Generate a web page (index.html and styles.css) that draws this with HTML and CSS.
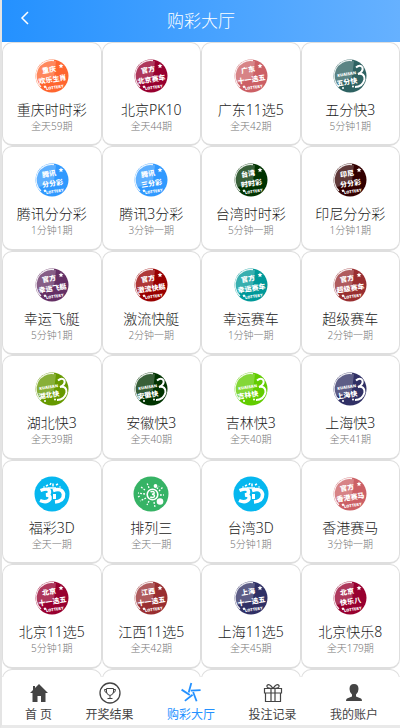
FILE: index.html
```html
<!DOCTYPE html>
<html lang="zh-CN">
<head>
<meta charset="utf-8">
<meta name="viewport" content="width=device-width, initial-scale=1">
<title>购彩大厅</title>
<link rel="stylesheet" href="styles.css">
</head>
<body>
<svg class="defs" aria-hidden="true">
  <symbol id="disc" viewBox="0 0 36 36">
    <circle cx="18" cy="18" r="16.5" fill="currentColor"/>
    <path d="M2.500 18A15.500 15.500 0 0 1 22 3L20 19Q12 24 4 25Z" fill="#fff" opacity=".22"/>
    <path d="M7 29A15.300 15.300 0 0 1 20 2.700" fill="none" stroke="#fff" stroke-width="1.200" opacity=".9"/>
  </symbol>
  <symbol id="badge" viewBox="0 0 36 36">
    <use href="#disc"/>
    <path d="M27 5.500l.7 1.600 1.700.2-1.300 1.200.4 1.700-1.500-.9-1.500.9.4-1.700-1.300-1.200 1.700-.2ZM11 27l.5 1.100 1.200.2-.9.800.3 1.200-1.100-.6-1.100.6.3-1.200-.9-.8 1.200-.2Z" fill="#fff"/>
  </symbol>
  <symbol id="quick" viewBox="0 0 36 36">
    <use href="#disc"/>
    <path d="M24 9.500Q28 6 30.500 9.500Q31.500 13.500 26 16Q33 15 32.500 21.500Q30.500 29 23 29" fill="none" stroke="#fff" stroke-width="2"/>
    <circle cx="11" cy="30" r="1" fill="#fff"/><circle cx="21" cy="28.500" r="1" fill="#fff"/>
  </symbol>
  <symbol id="three-d" viewBox="0 0 36 36">
    <circle cx="18" cy="18" r="17.500" fill="currentColor"/>
    <path d="M6.500 14.500Q16 11 15.500 16.500Q15 18.500 12 19Q17 19 16 23Q13 27.500 6 24.500" fill="none" stroke="#fff" stroke-width="3.400"/>
    <path d="M19 14.500Q28 11.500 29.500 18Q30 25 21 26" fill="none" stroke="#fff" stroke-width="3.600"/>
    <path d="M20.500 18V23" stroke="#fff" stroke-width="3"/>
    <path d="M12 10l2-1M16 9l1-2M19 7.500v3M22 9l2-1M14 12h8" stroke="#fff" stroke-width="1.500"/>
    <circle cx="10" cy="11" r=".8" fill="#fff"/><circle cx="26" cy="11" r=".8" fill="#fff"/>
  </symbol>
  <symbol id="burst" viewBox="0 0 36 36">
    <circle cx="18" cy="18" r="17.500" fill="currentColor"/>
    <circle cx="19.500" cy="18.500" r="5.300" fill="none" stroke="#fff" stroke-width="1.600"/>
    <path d="M17.500 15.800Q22 14.500 21 17.800L19 18.300Q22.500 18.500 21 21Q19.500 22 17.300 21" fill="none" stroke="#fff" stroke-width="1.500"/>
    <circle cx="27" cy="25.500" r="3.300" fill="#fff"/><circle cx="22.500" cy="10" r="1.900" fill="#fff"/>
    <path d="M12 14L8 11M12 18L5 17M13 22L7 25M16 25L14 29M16 12L14 7M26 15L30 11M27 19h4M21 26l1 5M24 13l2-3M5 21l2-1" stroke="#fff" stroke-width="1.300" stroke-dasharray="1.800 1.300"/>
  </symbol>
</svg>

<header class="topbar">
  <a class="back" href="#" aria-label="返回"><svg viewBox="0 0 10 14"><path d="M8 1L2 7L8 13"/></svg></a>
  <h1>购彩大厅</h1>
</header>

<main class="hall">
  <a class="card" href="#"><svg class="logo orange" viewBox="0 0 36 36"><use href="#badge"/><g class="mark"><text x="16" y="14">重庆</text><text x="18" y="24">欢乐生肖</text><text class="caption" x="19" y="31">LOTTERY</text></g></svg><h2>重庆时时彩</h2><p>全天59期</p></a>
  <a class="card" href="#"><svg class="logo crimson" viewBox="0 0 36 36"><use href="#badge"/><g class="mark"><text x="16" y="14">官方</text><text x="18" y="24">北京赛车</text><text class="caption" x="19" y="31">LOTTERY</text></g></svg><h2>北京PK10</h2><p>全天44期</p></a>
  <a class="card" href="#"><svg class="logo rose" viewBox="0 0 36 36"><use href="#badge"/><g class="mark"><text x="16" y="14">广东</text><text x="18" y="24">十一选五</text><text class="caption" x="19" y="31">LOTTERY</text></g></svg><h2>广东11选5</h2><p>全天42期</p></a>
  <a class="card" href="#"><svg class="logo slate" viewBox="0 0 36 36"><use href="#quick"/><g class="mark"><text class="caption" x="15" y="17">KUAISAN</text><text x="14" y="26">五分快</text></g></svg><h2>五分快3</h2><p>5分钟1期</p></a>

  <a class="card" href="#"><svg class="logo blue" viewBox="0 0 36 36"><use href="#badge"/><g class="mark"><text x="16" y="14">腾讯</text><text x="18" y="24">分分彩</text><text class="caption" x="19" y="31">LOTTERY</text></g></svg><h2>腾讯分分彩</h2><p>1分钟1期</p></a>
  <a class="card" href="#"><svg class="logo blue" viewBox="0 0 36 36"><use href="#badge"/><g class="mark"><text x="16" y="14">腾讯</text><text x="18" y="24">三分彩</text><text class="caption" x="19" y="31">LOTTERY</text></g></svg><h2>腾讯3分彩</h2><p>3分钟一期</p></a>
  <a class="card" href="#"><svg class="logo forest" viewBox="0 0 36 36"><use href="#badge"/><g class="mark"><text x="16" y="14">台湾</text><text x="18" y="24">时时彩</text><text class="caption" x="19" y="31">LOTTERY</text></g></svg><h2>台湾时时彩</h2><p>5分钟一期</p></a>
  <a class="card" href="#"><svg class="logo maroon" viewBox="0 0 36 36"><use href="#badge"/><g class="mark"><text x="16" y="14">印尼</text><text x="18" y="24">分分彩</text><text class="caption" x="19" y="31">LOTTERY</text></g></svg><h2>印尼分分彩</h2><p>1分钟1期</p></a>

  <a class="card" href="#"><svg class="logo purple" viewBox="0 0 36 36"><use href="#badge"/><g class="mark"><text x="16" y="14">官方</text><text x="18" y="24">幸运飞艇</text><text class="caption" x="19" y="31">LOTTERY</text></g></svg><h2>幸运飞艇</h2><p>5分钟1期</p></a>
  <a class="card" href="#"><svg class="logo red" viewBox="0 0 36 36"><use href="#badge"/><g class="mark"><text x="16" y="14">官方</text><text x="18" y="24">激流快艇</text><text class="caption" x="19" y="31">LOTTERY</text></g></svg><h2>激流快艇</h2><p>2分钟一期</p></a>
  <a class="card" href="#"><svg class="logo teal" viewBox="0 0 36 36"><use href="#badge"/><g class="mark"><text x="16" y="14">官方</text><text x="18" y="24">幸运赛车</text><text class="caption" x="19" y="31">LOTTERY</text></g></svg><h2>幸运赛车</h2><p>1分钟一期</p></a>
  <a class="card" href="#"><svg class="logo brick" viewBox="0 0 36 36"><use href="#badge"/><g class="mark"><text x="16" y="14">官方</text><text x="18" y="24">超级赛车</text><text class="caption" x="19" y="31">LOTTERY</text></g></svg><h2>超级赛车</h2><p>2分钟一期</p></a>

  <a class="card" href="#"><svg class="logo olive" viewBox="0 0 36 36"><use href="#quick"/><g class="mark"><text class="caption" x="15" y="17">KUAISAN</text><text x="14" y="26">湖北快</text></g></svg><h2>湖北快3</h2><p>全天39期</p></a>
  <a class="card" href="#"><svg class="logo forest" viewBox="0 0 36 36"><use href="#quick"/><g class="mark"><text class="caption" x="15" y="17">KUAISAN</text><text x="14" y="26">安徽快</text></g></svg><h2>安徽快3</h2><p>全天40期</p></a>
  <a class="card" href="#"><svg class="logo lime" viewBox="0 0 36 36"><use href="#quick"/><g class="mark"><text class="caption" x="15" y="17">KUAISAN</text><text x="14" y="26">吉林快</text></g></svg><h2>吉林快3</h2><p>全天40期</p></a>
  <a class="card" href="#"><svg class="logo navy" viewBox="0 0 36 36"><use href="#quick"/><g class="mark"><text class="caption" x="15" y="17">KUAISAN</text><text x="14" y="26">上海快</text></g></svg><h2>上海快3</h2><p>全天41期</p></a>

  <a class="card" href="#"><svg class="logo cyan" viewBox="0 0 36 36"><use href="#three-d"/></svg><h2>福彩3D</h2><p>全天一期</p></a>
  <a class="card" href="#"><svg class="logo green" viewBox="0 0 36 36"><use href="#burst"/></svg><h2>排列三</h2><p>全天一期</p></a>
  <a class="card" href="#"><svg class="logo cyan" viewBox="0 0 36 36"><use href="#three-d"/></svg><h2>台湾3D</h2><p>5分钟1期</p></a>
  <a class="card" href="#"><svg class="logo rose" viewBox="0 0 36 36"><use href="#badge"/><g class="mark"><text x="16" y="14">官方</text><text x="18" y="24">香港赛马</text><text class="caption" x="19" y="31">LOTTERY</text></g></svg><h2>香港赛马</h2><p>3分钟一期</p></a>

  <a class="card" href="#"><svg class="logo crimson" viewBox="0 0 36 36"><use href="#badge"/><g class="mark"><text x="16" y="14">北京</text><text x="18" y="24">十一选五</text><text class="caption" x="19" y="31">LOTTERY</text></g></svg><h2>北京11选5</h2><p>5分钟1期</p></a>
  <a class="card" href="#"><svg class="logo brick" viewBox="0 0 36 36"><use href="#badge"/><g class="mark"><text x="16" y="14">江西</text><text x="18" y="24">十一选五</text><text class="caption" x="19" y="31">LOTTERY</text></g></svg><h2>江西11选5</h2><p>全天42期</p></a>
  <a class="card" href="#"><svg class="logo navy" viewBox="0 0 36 36"><use href="#badge"/><g class="mark"><text x="16" y="14">上海</text><text x="18" y="24">十一选五</text><text class="caption" x="19" y="31">LOTTERY</text></g></svg><h2>上海11选5</h2><p>全天45期</p></a>
  <a class="card" href="#"><svg class="logo crimson" viewBox="0 0 36 36"><use href="#badge"/><g class="mark"><text x="16" y="14">北京</text><text x="18" y="24">快乐八</text><text class="caption" x="19" y="31">LOTTERY</text></g></svg><h2>北京快乐8</h2><p>全天179期</p></a>

  <div class="card"></div><div class="card"></div><div class="card"></div><div class="card"></div>
</main>

<nav class="tabs">
  <a href="#"><svg viewBox="0 0 24 24"><path fill="currentColor" d="M12 3L21 12H18.500V21H14V15H10.500V21H5.500V12H3L6 9V5H8V7Z"/></svg><span>首 页</span></a>
  <a href="#"><svg viewBox="0 0 24 24" fill="none" stroke="currentColor"><circle cx="12" cy="12" r="10" stroke-width="1.300"/><path d="M8.500 7.500H15.500V11Q15 14 12 14.500Q9 14 8.500 11ZM8.500 8.500H6.500Q6.500 11.500 9 12M15.500 8.500H17.500Q17.500 11.500 15 12M12 14.500V17M9.500 17.500H14.500"/></svg><span>开奖结果</span></a>
  <a class="active" href="#" aria-current="page"><svg viewBox="0 0 24 24" fill="none" stroke="currentColor" stroke-width="1.800"><path id="arm" d="M9.700 11.500L12.300 2"/><use href="#arm" transform="rotate(72 12 12)"/><use href="#arm" transform="rotate(144 12 12)"/><use href="#arm" transform="rotate(216 12 12)"/><use href="#arm" transform="rotate(288 12 12)"/></svg><span>购彩大厅</span></a>
  <a href="#"><svg viewBox="0 0 24 24" fill="none" stroke="currentColor" stroke-width="1.200"><path d="M3.500 7.500H20.500V12H3.500ZM4.500 12V20.500H19.500V12M10 7.500V20.500M14 7.500V20.500M12 7.500Q5 7.500 6 4.500Q8.500 2 12 7.500Q15.500 2 18 4.500Q19 7.500 12 7.500"/></svg><span>投注记录</span></a>
  <a href="#"><svg viewBox="0 0 24 24"><path fill="currentColor" d="M12 3Q16.500 3 16.500 8Q16.500 11.500 14 13.500V15.500L19 17.500Q20 18 20 20H4Q4 18 5 17.500L10 15.500V13.500Q7.500 11.500 7.500 8Q7.500 3 12 3Z"/></svg><span>我的账户</span></a>
</nav>
</body>
</html>
```
FILE: styles.css
```css
* { box-sizing: border-box; }

body {
  margin: 0;
  height: 100vh;
  display: flex;
  flex-direction: column;
  overflow: hidden;
  border-left: 2px solid #e4e4e4;
  border-bottom: 3px solid #e9e9e9;
  background: #fff;
  color: #222;
  font-family: "Noto Sans", "Noto Sans CJK SC", sans-serif;
}

a { color: inherit; text-decoration: none; }
.defs { position: absolute; width: 0; height: 0; }

.topbar {
  flex: none;
  height: 42px;
  display: grid;
  grid-template-columns: 46px 1fr 46px;
  align-items: center;
  background: linear-gradient(90deg, #2491ff, #66b1ff);
  color: #fff;
}
.topbar h1 {
  margin: 0;
  font-size: 17px;
  line-height: 24px;
  font-weight: 300;
  text-align: center;
}
.back { display: flex; justify-content: center; padding-bottom: 7px; }
.back svg { width: 10px; height: 14px; }
.back path { fill: none; stroke: #fff; stroke-width: 1.5; }

.hall {
  flex: 1;
  min-height: 0;
  overflow: hidden;
  display: grid;
  grid-template-columns: repeat(4, 1fr);
  grid-auto-rows: 104px 105px;
}
.card {
  display: flex;
  flex-direction: column;
  align-items: center;
  padding-top: 15px;
  border: 1px solid #dedede;
  border-bottom-width: 2px;
  border-radius: 10px;
  background: #fff;
}
.card h2 {
  margin: 6px 0 0;
  font-size: 14px;
  line-height: 20px;
  font-weight: 300;
  white-space: nowrap;
}
.card p {
  margin: 0;
  font-size: 10px;
  line-height: 12px;
  font-weight: 300;
  color: #777;
  white-space: nowrap;
}

.logo { flex: none; width: 36px; height: 36px; }
.mark {
  transform: rotate(-9deg);
  transform-origin: 18px 18px;
  fill: #fff;
  font-family: "Noto Sans CJK SC", sans-serif;
  font-size: 7px;
  font-weight: 900;
  text-anchor: middle;
}
.caption {
  font-family: "Noto Sans", sans-serif;
  font-size: 4px;
}
.orange { color: #ff662f; }
.crimson { color: #98002f; }
.rose { color: #cc6065; }
.slate { color: #2e6262; }
.blue { color: #3099ff; }
.forest { color: #003300; }
.maroon { color: #330000; }
.purple { color: #653065; }
.red { color: #990000; }
.teal { color: #009999; }
.brick { color: #992e30; }
.olive { color: #669900; }
.lime { color: #62cc00; }
.navy { color: #303065; }
.cyan { color: #06b7ef; }
.green { color: #36b365; }

.tabs {
  flex: none;
  height: 48px;
  display: flex;
  justify-content: space-between;
  padding: 4px 22px 0 23px;
  background: #fff;
  color: #444;
}
.tabs a {
  display: flex;
  flex-direction: column;
  align-items: center;
  font-size: 12px;
  line-height: 20px;
  white-space: nowrap;
}
.tabs svg { width: 24px; height: 24px; }
.tabs .active { color: #2491ff; }
```
